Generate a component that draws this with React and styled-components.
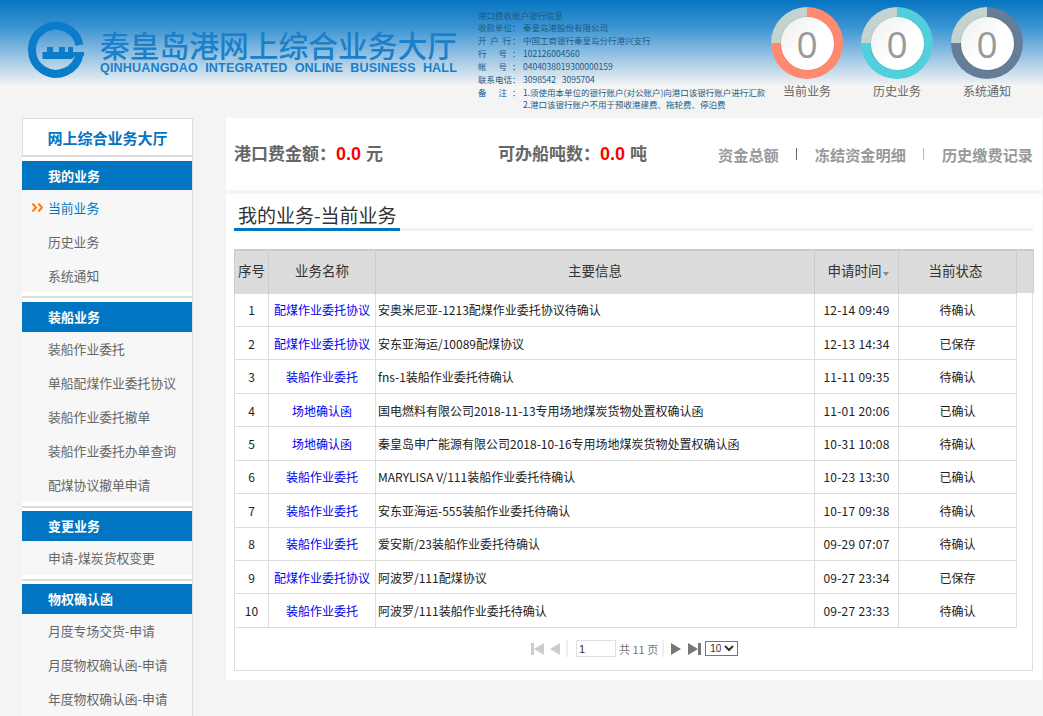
import React from "react";
import styled, { createGlobalStyle } from "styled-components";

const FONT = `"Noto Sans CJK SC", "Open Sans", sans-serif`;

const Global = createGlobalStyle`
  html, body { margin: 0; padding: 0; height: 716px; overflow: hidden; background: #f4f4f4; }
  body { font-family: ${FONT}; font-size: 12px; color: #333; }
  * { box-sizing: border-box; }
`;

const Page = styled.div`
  width: 1043px;
  height: 716px;
  overflow: hidden;
`;

const Header = styled.header`
  height: 118px;
  display: flex;
  background: linear-gradient(to bottom, #0674c1 0, #3d95d3 28px, #a9cde7 62px, #f4f4f4 86px, #f4f4f4 100%);
`;

const Logo = styled.div`
  width: 478px;
  flex: none;
  padding: 22px 0 0 28px;
  display: flex;
  gap: 16px;
`;

const LogoSvg = styled.svg`
  flex: none;
`;

const LogoText = styled.div`
  display: flex;
  flex-direction: column;
  padding-top: 4px;
`;

const LogoCn = styled.div`
  font-size: 29.75px;
  line-height: 36px;
  font-weight: 500;
  color: #1b80c9;
  white-space: nowrap;
`;

const LogoEn = styled.div`
  font-family: "Liberation Sans", sans-serif;
  font-size: 12.6px;
  line-height: 13px;
  font-weight: 700;
  letter-spacing: 0.13px;
  word-spacing: 3.6px;
  color: #1b80c9;
  white-space: nowrap;
`;

const Bank = styled.div`
  width: 293px;
  flex: none;
  padding-top: 8.5px;
  color: #1d5a85;
  font-size: 8.5px;
`;

const BankLine = styled.div`
  display: flex;
  height: 12.85px;
  line-height: 12.85px;
  white-space: nowrap;
`;

const BankLabel = styled.span`
  width: 42.5px;
  margin-right: 2.5px;
  flex: none;
  text-align: justify;
  text-align-last: justify;
`;

const Stats = styled.div`
  display: flex;
  padding-top: 7px;
  gap: 18px;
`;

const Stat = styled.div`
  width: 72px;
  display: flex;
  flex-direction: column;
  align-items: center;
`;

const Ring = styled.div`
  width: 72px;
  height: 72px;
  border-radius: 50%;
  background: conic-gradient(${(p) => p.$color} 0 270deg, #c4d3cf 270deg 360deg);
  display: flex;
  align-items: center;
  justify-content: center;
`;

const RingInner = styled.div`
  width: 53px;
  height: 53px;
  border-radius: 50%;
  background: linear-gradient(135deg, #eeeeee 0%, #ffffff 55%);
  box-shadow: 0 0 2px rgba(0, 0, 0, 0.15);
  display: flex;
  align-items: center;
  justify-content: center;
  color: #999;
  font-family: "Open Sans", sans-serif;
  font-size: 37px;
  line-height: 1;
`;

const StatLabel = styled.div`
  margin-top: 3px;
  font-size: 12px;
  line-height: 18px;
  color: #666;
`;

const Body = styled.div`
  display: flex;
  padding-left: 22px;
  gap: 33px;
`;

const Side = styled.nav`
  width: 171px;
  flex: none;
  background: #fff;
  border-right: 1px solid #ddd;
`;

const SideTitle = styled.div`
  height: 39px;
  border: 1px solid #ddd;
  border-right: 0;
  border-bottom-width: 2px;
  color: #0075c2;
  font-size: 15px;
  font-weight: 700;
  line-height: 37px;
  text-align: center;
`;

const SideGap = styled.div`
  height: 4px;
  background: #fff;
`;

const SideRule = styled.div`
  height: ${(p) => p.$h}px;
  background: linear-gradient(to bottom, #fff 0 4px, #ddd 4px 6px, #fff 6px);
`;

const SideHead = styled.div`
  height: ${(p) => p.$h || 30}px;
  background: #0075c2;
  color: #fff;
  font-size: 13px;
  font-weight: 700;
  line-height: ${(p) => p.$h || 30}px;
  padding-left: 26px;
`;

const SideItem = styled.a`
  display: block;
  position: relative;
  height: 34px;
  background: #f7f7f7;
  color: ${(p) => (p.$active ? "#0075c2" : "#666")};
  font-size: 12.8px;
  line-height: ${(p) => p.$lh || 34}px;
  padding-left: 26px;
  white-space: nowrap;
`;

const Chevrons = styled.svg`
  position: absolute;
  left: 10px;
  top: 13px;
`;

const Main = styled.main`
  width: 816px;
  flex: none;
  display: flex;
  flex-direction: column;
  gap: 4px;
`;

const Summary = styled.div`
  height: 72px;
  background: #fff;
  display: flex;
  align-items: center;
  padding: 0 9px 0 8px;
  color: #666;
`;

const Amount = styled.div`
  width: ${(p) => p.$w || "auto"};
  flex: none;
  margin-bottom: 4px;
  font-size: 17px;
  font-weight: 700;
  white-space: pre;
`;

const Red = styled.span`
  color: #f00;
  font-family: "Liberation Sans", sans-serif;
  font-size: 18px;
`;

const Links = styled.div`
  margin-left: auto;
  flex: none;
  display: flex;
  align-items: center;
  color: #999;
  font-size: 15.2px;
  font-weight: 700;
  white-space: nowrap;
`;

const LinkSep = styled.span`
  width: 1px;
  height: 12px;
  background: ${(p) => p.$c || "#666"};
  margin: 0 18px 0 17px;
`;

const Content = styled.section`
  height: 486px;
  background: #fff;
  padding: 8px 9px 9px 8px;
  display: flex;
  flex-direction: column;
`;

const TitleBar = styled.div`
  border-bottom: 3px solid #f2f2f2;
  height: 29px;
`;

const Title = styled.h2`
  display: inline-block;
  margin: 0 0 -3px;
  width: 166px;
  height: 29px;
  border-bottom: 3px solid #0075c2;
  padding-left: 4px;
  font-size: 19px;
  font-weight: 400;
  line-height: 25px;
  color: #333;
  white-space: nowrap;
`;

const GridBox = styled.div`
  margin-top: 18px;
  flex: 1;
  border: 1px solid #ddd;
  border-top: 0;
  display: flex;
  flex-direction: column;
`;

const Table = styled.table`
  width: 799px;
  table-layout: fixed;
  border-collapse: collapse;
  margin-left: -1px;
`;

const Th = styled.th`
  height: 43px;
  background: #dcdcdc;
  border-top: 2px solid #ccc;
  border-right: 1px solid #ccc;
  border-left: 1px solid #ccc;
  font-size: 13.5px;
  font-weight: 400;
  color: #333;
  text-align: center;
  padding: 0 ${(p) => p.$pr || 0}px 3px ${(p) => p.$pl || 0}px;
  white-space: nowrap;
`;

const Td = styled.td`
  height: 33.45px;
  border: 1px solid #ddd;
  font-size: 12px;
  color: #222;
  text-align: ${(p) => p.$align || "center"};
  padding: ${(p) => (p.$align ? "0 2px" : "0")};
  letter-spacing: ${(p) => (p.$spaced ? "0.25px" : "0")};
  white-space: nowrap;
`;

const Blue = styled.a`
  color: #0000f0;
`;

const SortMark = styled.span`
  display: inline-block;
  width: 0;
  height: 0;
  margin-left: 1px;
  border: 3px solid transparent;
  border-top: 4px solid #888;
  vertical-align: -3px;
`;

const Pager = styled.div`
  flex: 1;
  display: flex;
  align-items: center;
  padding-left: 296px;
  color: #777;
  font-size: 11px;
`;

const PagerIcon = styled.svg`
  flex: none;
  margin-right: ${(p) => p.$mr || 0}px;
`;

const PagerSep = styled.span`
  width: 2px;
  height: 17px;
  background: #eee;
  margin: ${(p) => p.$m};
`;

const PageInput = styled.input`
  width: 40px;
  height: 17px;
  border: 1px solid #e0e0e0;
  padding: 0 2px;
  font-family: "Liberation Sans", sans-serif;
  font-size: 11px;
  color: #333;
  outline: none;
`;

const PageText = styled.span`
  margin: 0 4px 0 3px;
  white-space: nowrap;
`;

const PageSelect = styled.select`
  width: 33px;
  height: 15px;
  margin-left: 4px;
  border: 1px solid #767676;
  background: #fff;
  padding: 0;
  font-family: "Liberation Sans", sans-serif;
  font-size: 10px;
  color: #333;
`;

const COLON = "\uff1a";

const bankLines = [
  ["收款单位", "秦皇岛港股份有限公司"],
  ["开 户 行", "中国工商银行秦皇岛分行港兴支行"],
  ["行 号", "102126004560"],
  ["帐 号", "0404038019300000159"],
  ["联系电话", "3098542\u00a0\u00a0\u00a03095704"],
  ["备 注", "1.须使用本单位的银行账户(对公账户)向港口该银行账户进行汇款"],
  ["", "2.港口该银行账户不用于预收港建费、拖轮费、停泊费"],
];

const rows = [
  ["配煤作业委托协议", "安奥米尼亚-1213配煤作业委托协议待确认", "12-14 09:49", "待确认"],
  ["配煤作业委托协议", "安东亚海运/10089配煤协议", "12-13 14:34", "已保存"],
  ["装船作业委托", "fns-1装船作业委托待确认", "11-11 09:35", "待确认"],
  ["场地确认函", "国电燃料有限公司2018-11-13专用场地煤炭货物处置权确认函", "11-01 20:06", "已确认"],
  ["场地确认函", "秦皇岛申广能源有限公司2018-10-16专用场地煤炭货物处置权确认函", "10-31 10:08", "待确认"],
  ["装船作业委托", "MARYLISA V/111装船作业委托待确认", "10-23 13:30", "已确认"],
  ["装船作业委托", "安东亚海运-555装船作业委托待确认", "10-17 09:38", "待确认"],
  ["装船作业委托", "爱安斯/23装船作业委托待确认", "09-29 07:07", "待确认"],
  ["配煤作业委托协议", "阿波罗/111配煤协议", "09-27 23:34", "已保存"],
  ["装船作业委托", "阿波罗/111装船作业委托待确认", "09-27 23:33", "待确认"],
];

const nav = [
  { head: "我的业务", h: 29, lh: 36, items: ["当前业务", "历史业务", "系统通知"] },
  { head: "装船业务", rule: 10, items: ["装船作业委托", "单船配煤作业委托协议", "装船作业委托撤单", "装船作业委托办单查询", "配煤协议撤单申请"] },
  { head: "变更业务", rule: 9, items: ["申请-煤炭货权变更"] },
  { head: "物权确认函", rule: 9, items: ["月度专场交货-申请", "月度物权确认函-申请", "年度物权确认函-申请"] },
];

const stats = [
  ["当前业务", "#ff8a70"],
  ["历史业务", "#52cfdc"],
  ["系统通知", "#667d98"],
];

const LogoMark = () => (
  <LogoSvg width="56" height="56" viewBox="0 0 56 56">
    <path d="M51.5 23 A24 24 0 1 0 51.6 32" fill="none" stroke="#0b7dc8" strokeWidth="8" />
    <path
      d="M14.5 37 L14.5 30 L19 30 L19 25 L25 25 L25 30 L31 30 L31 25 L37 25 L37 30 L40 30 L40 25 L45 25 L45 30 L56 30 L56 34 L47 34 L44 37 Z"
      fill="#0b7dc8"
    />
  </LogoSvg>
);

const Arrow = ({ color, flip, bar, mr }) => (
  <PagerIcon width={bar ? 13 : 11} height="12" viewBox={bar ? "0 0 13 12" : "0 0 11 12"} $mr={mr}>
    {flip ? (
      <path d={bar ? "M13 0 L3 6 L13 12 Z" : "M11 0 L1 6 L11 12 Z"} fill={color} />
    ) : (
      <path d="M0 0 L10 6 L0 12 Z" fill={color} />
    )}
    {bar && <rect x={flip ? 0 : 10} y="0" width="3" height="12" fill={color} />}
  </PagerIcon>
);

export default function App() {
  return (
    <Page>
      <Global />
      <Header>
        <Logo>
          <LogoMark />
          <LogoText>
            <LogoCn>秦皇岛港网上综合业务大厅</LogoCn>
            <LogoEn>QINHUANGDAO INTEGRATED ONLINE BUSINESS HALL</LogoEn>
          </LogoText>
        </Logo>
        <Bank>
          <BankLine>港口费收账户银行信息</BankLine>
          {bankLines.map(([a, b], i) => (
            <BankLine key={i}>
              <BankLabel>{a && a + COLON}</BankLabel>
              <span>{b}</span>
            </BankLine>
          ))}
        </Bank>
        <Stats>
          {stats.map(([label, color]) => (
            <Stat key={label}>
              <Ring $color={color}>
                <RingInner>0</RingInner>
              </Ring>
              <StatLabel>{label}</StatLabel>
            </Stat>
          ))}
        </Stats>
      </Header>
      <Body>
        <Side>
          <SideTitle>网上综合业务大厅</SideTitle>
          <SideGap />
          {nav.map((g, gi) => (
            <React.Fragment key={g.head}>
              {g.rule && <SideRule $h={g.rule} />}
              <SideHead $h={g.h}>{g.head}</SideHead>
              {g.items.map((it, i) => (
                <SideItem key={it} $active={gi === 0 && i === 0} $lh={g.lh}>
                  {gi === 0 && i === 0 && (
                    <Chevrons width="12" height="9" viewBox="0 0 12 9">
                      <path d="M0.5 0.5 L4 4.5 L0.5 8.5 M6.5 0.5 L10 4.5 L6.5 8.5" fill="none" stroke="#ff7a14" strokeWidth="2" />
                    </Chevrons>
                  )}
                  {it}
                </SideItem>
              ))}
            </React.Fragment>
          ))}
        </Side>
        <Main>
          <Summary>
            <Amount $w="264px">港口费金额{COLON}<Red>0.0 </Red>元</Amount>
            <Amount>可办船吨数{COLON}<Red>0.0 </Red>吨</Amount>
            <Links>
              <span>资金总额</span>
              <LinkSep />
              <span>冻结资金明细</span>
              <LinkSep $c="#bbb" />
              <span>历史缴费记录</span>
            </Links>
          </Summary>
          <Content>
            <TitleBar>
              <Title>我的业务-当前业务</Title>
            </TitleBar>
            <GridBox>
              <Table>
                <colgroup>
                  <col width="34" />
                  <col width="107" />
                  <col width="439" />
                  <col width="84" />
                  <col width="118" />
                  <col width="17" />
                </colgroup>
                <thead>
                  <tr>
                    <Th>序号</Th>
                    <Th>业务名称</Th>
                    <Th>主要信息</Th>
                    <Th $pl={3}>申请时间<SortMark /></Th>
                    <Th $pr={4}>当前状态</Th>
                    <Th />
                  </tr>
                </thead>
                <tbody>
                  {rows.map((r, i) => (
                    <tr key={i}>
                      <Td>{i + 1}</Td>
                      <Td><Blue>{r[0]}</Blue></Td>
                      <Td $align="left">{r[1]}</Td>
                      <Td $spaced>{r[2]}</Td>
                      <Td>{r[3]}</Td>
                    </tr>
                  ))}
                </tbody>
              </Table>
              <Pager>
                <Arrow color="#ccc" flip bar mr={5} />
                <Arrow color="#ccc" flip />
                <PagerSep $m="0 8px 0 6px" />
                <PageInput defaultValue="1" />
                <PageText>共 11 页</PageText>
                <PagerSep $m="0 7px 0 0" />
                <Arrow color="#777" mr={6} />
                <Arrow color="#777" bar />
                <PageSelect defaultValue="10">
                  <option>10</option>
                  <option>20</option>
                </PageSelect>
              </Pager>
            </GridBox>
          </Content>
        </Main>
      </Body>
    </Page>
  );
}
